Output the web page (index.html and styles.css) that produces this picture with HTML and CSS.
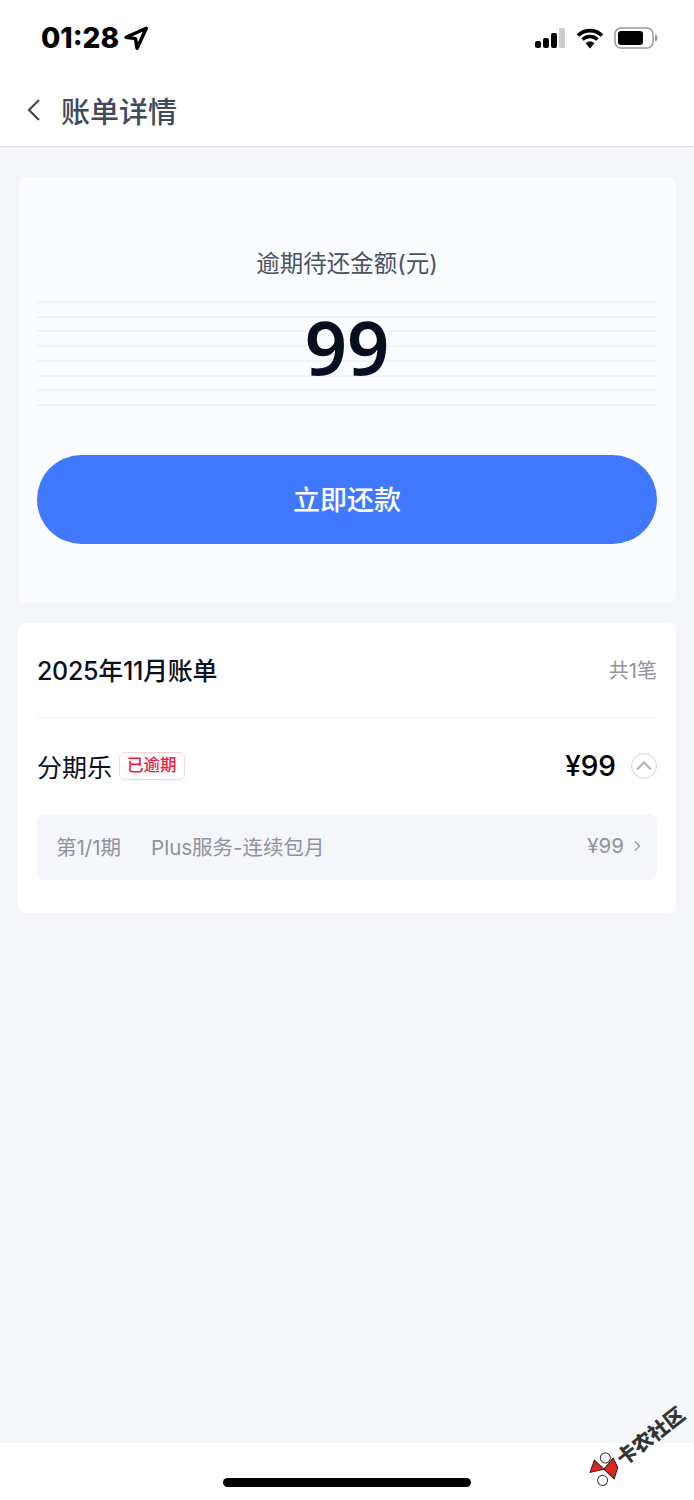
FILE: index.html
```html
<!DOCTYPE html>
<html lang="zh-CN">
  <head>
    <meta charset="UTF-8" />
    <meta name="viewport" content="width=device-width, initial-scale=1.0" />
    <title>账单详情</title>
    <link rel="stylesheet" href="styles.css">
  </head>
  <body>
    <div class="page">
      <div class="status-bar">
        <div class="status-left">
          <span class="status-time">01:28</span>
          <svg class="icon-location" width="26" height="26" viewBox="0 0 24 24">
            <path d="M21.500 3 2.800 11.300l8.700 1.300 1.500 8.900z" fill="none" stroke="#000" stroke-width="3.200" stroke-linejoin="round"/>
          </svg>
        </div>
        <div class="status-right">
          <svg width="32" height="20" viewBox="0 0 32 20">
            <rect x="1" y="13" width="6" height="7" rx="2" fill="#000"/>
            <rect x="9" y="10" width="6" height="10" rx="2" fill="#000"/>
            <rect x="17" y="5" width="6" height="15" rx="2" fill="#000"/>
            <rect x="25" y="0" width="6" height="20" rx="1" fill="#ccc"/>
          </svg>
          <svg width="28" height="21" viewBox="0 0 28 21">
            <path d="M2 7.500C9 1 19 1 26 7.500M6.500 11.500C11 7.500 17 7.500 21.500 11.500" fill="none" stroke="#000" stroke-width="3.600"/>
            <path d="M9.500 15.200C12 13 16 13 18.500 15.200L14 20.500z" fill="#000"/>
          </svg>
          <svg width="44" height="22" viewBox="0 0 44 22">
            <rect x="1" y="1" width="38" height="20" rx="6" fill="none" stroke="#999" stroke-width="1.500"/>
            <rect x="4" y="4" width="25" height="14" rx="3" fill="#000"/>
            <path d="M41 7.500c2 .5 2.500 2 2.500 3.500s-.5 3-2.500 3.500z" fill="#999"/>
          </svg>
        </div>
      </div>

      <div class="nav-bar">
        <svg class="icon-back" width="14" height="24" viewBox="0 0 14 24">
          <path d="M12 2 2 12l10 10" fill="none" stroke="#414a59" stroke-width="2.200"/>
        </svg>
        <h1 class="nav-title">账单详情</h1>
      </div>

      <div class="content">
        <div class="card card-amount">
          <div class="amount-label">逾期待还金额(元)</div>
          <div class="amount-value">99</div>
          <button class="btn-pay">立即还款</button>
        </div>

        <div class="card card-bill">
          <div class="bill-head">
            <span class="bill-title">2025年11月账单</span>
            <span class="bill-count">共1笔</span>
          </div>
          <div class="bill-row">
            <div class="bill-name">
              <span>分期乐</span>
              <span class="tag-overdue">已逾期</span>
            </div>
            <div class="bill-price">
              <span>¥99</span>
              <svg width="26" height="26" viewBox="0 0 26 26">
                <circle cx="13" cy="13" r="12.400" fill="none" stroke="#cfd1d6" stroke-width="1"/>
                <path d="M6 16.500 13 9.500l7 7" fill="none" stroke="#b4b7bd" stroke-width="2.400"/>
              </svg>
            </div>
          </div>
          <div class="bill-item">
            <span class="item-period">第1/1期</span>
            <span class="item-name">Plus服务-连续包月</span>
            <span class="item-price">¥99</span>
            <svg width="7" height="12" viewBox="0 0 7 12">
              <path d="M1 1.500 5.500 6 1 10.500" fill="none" stroke="#8f939b" stroke-width="1.200"/>
            </svg>
          </div>
        </div>
      </div>

      <div class="footer">
        <div class="home-bar"></div>
        <div class="watermark">
          <svg width="32" height="32" viewBox="0 0 32 32">
            <path d="M3 9 14 2l2 13z" fill="#e3261d" stroke="#222" stroke-width="1"/>
            <path d="M16 15 30 12l-2 10-10 7z" fill="#e3261d" stroke="#222" stroke-width="1"/>
            <circle cx="24" cy="7" r="5" fill="#fff" stroke="#333" stroke-width="1"/>
            <circle cx="8" cy="23" r="5" fill="#fff" stroke="#333" stroke-width="1"/>
          </svg>
          <span class="watermark-text">卡农社区</span>
        </div>
      </div>
    </div>
  </body>
</html>
```

FILE: styles.css
```css
* {
  box-sizing: border-box;
}

body {
  margin: 0;
  background-color: #f5f6fa;
  font-family: Inter, "Noto Sans CJK SC", sans-serif;
}

.page {
  position: relative;
  display: flex;
  flex-direction: column;
  height: 1500px;
  overflow: hidden;
}

.status-bar {
  display: flex;
  justify-content: space-between;
  align-items: center;
  height: 74px;
  padding: 2px 36px 0 41px;
  background: white;
}

.status-left {
  display: flex;
  align-items: center;
  gap: 4px;
}

.status-time {
  font-size: 28px;
  font-weight: 800;
  color: #000;
}

.status-right {
  display: flex;
  align-items: center;
  gap: 10px;
}

.nav-bar {
  display: flex;
  align-items: center;
  height: 73px;
  padding: 0 0 0 27px;
  background: white;
  border-bottom: 1px solid #dfe0e5;
}

.icon-back {
  margin-right: 20px;
}

.nav-title {
  margin: 0;
  font-size: 29px;
  font-weight: 500;
  color: #414a59;
}

.content {
  flex: 1;
  padding: 30px 18px 0;
}

.card {
  background: white;
  border-radius: 8px;
  padding: 0 19px;
}

.card-amount {
  height: 426px;
  padding-top: 70px;
  margin-bottom: 20px;
  background: #fbfcff;
}

.amount-label {
  font-size: 23.500px;
  line-height: 34px;
  text-align: center;
  color: #4a5261;
}

.amount-value {
  height: 106px;
  margin-top: 20px;
  font-family: "Noto Sans", sans-serif;
  font-size: 74px;
  font-weight: 600;
  line-height: 92px;
  text-align: center;
  color: #060e1f;
  background-image: repeating-linear-gradient(#f2f3f8 0, #f2f3f8 2px, transparent 2px, transparent 14.700px);
}

.btn-pay {
  display: block;
  width: 100%;
  height: 89px;
  margin-top: 48px;
  padding-bottom: 3px;
  border: none;
  border-radius: 45px;
  background-color: #4079ff;
  color: white;
  font-family: inherit;
  font-size: 27px;
  font-weight: 500;
}

.card-bill {
  height: 290px;
}

.bill-head {
  display: flex;
  justify-content: space-between;
  align-items: center;
  height: 95px;
  padding-bottom: 2px;
  border-bottom: 1px solid #f2f3f6;
}

.bill-title {
  font-size: 25px;
  font-weight: 500;
  letter-spacing: -0.300px;
  color: #0a1120;
}

.bill-count {
  font-size: 20px;
  color: #8f939b;
}

.bill-row {
  display: flex;
  justify-content: space-between;
  align-items: center;
  height: 96px;
}

.bill-name {
  display: flex;
  align-items: center;
  gap: 7px;
  font-size: 25px;
  color: #0a1120;
}

.tag-overdue {
  padding: 0 7px;
  height: 28px;
  border: 1px solid #fcd3da;
  border-radius: 6px;
  font-size: 16.500px;
  font-weight: 500;
  line-height: 25px;
  color: #f5163f;
}

.bill-price {
  display: flex;
  align-items: center;
  gap: 15px;
  font-size: 28px;
  font-weight: 500;
  color: #000;
}

.bill-item {
  display: flex;
  align-items: center;
  height: 66px;
  padding: 0 16px 3px 19px;
  border-radius: 8px;
  background-color: #f5f6fa;
  font-size: 20.500px;
  color: #8f939b;
}

.item-period {
  margin-right: 30px;
}

.item-name {
  flex: 1;
}

.item-price {
  margin-right: 10px;
}

.footer {
  height: 57px;
  background: white;
}

.home-bar {
  width: 248px;
  height: 9px;
  margin: 35px auto 0;
  border-radius: 5px;
  background-color: #000;
}

/* watermark sits over the footer edge */
.watermark {
  position: absolute;
  right: 1px;
  bottom: 39px;
  display: flex;
  align-items: center;
  gap: 1px;
  transform: rotate(-38deg);
}

.watermark-text {
  font-size: 20px;
  font-weight: 900;
  color: #333;
}
```
